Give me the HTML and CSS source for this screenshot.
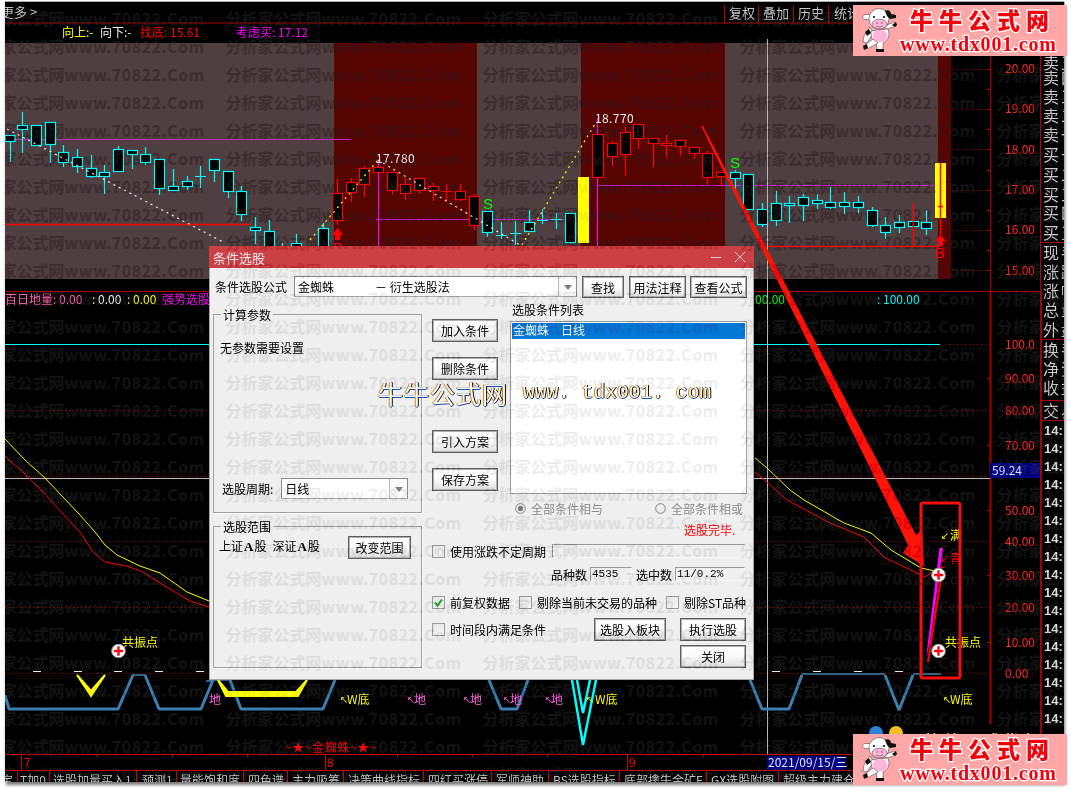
FILE: index.html
```html
<!DOCTYPE html>
<html lang="zh-CN">
<head>
<meta charset="utf-8">
<title>条件选股</title>
<link rel="stylesheet" href="styles.css">
</head>
<body>
<div class="screen">
  <svg class="defs" width="0" height="0" aria-hidden="true">
    <defs>
      <symbol id="cow" viewBox="0 0 36 46">
        <path class="cow-line" d="M8 20 2 29l-1 6 4 1 5-8 1-3Z" fill="#fff"/>
        <path class="cow-line" d="M25 22 34 19 33 15 27 17 22 20Z" fill="#fff"/>
        <path d="M30 18l4-3 1 3-2 2Z" fill="#111"/>
        <path class="cow-line" d="M9 24C9 33 12 35 14 36L15 43H21L21 36C27 33 28 28 26 22Z" fill="#fff"/>
        <ellipse cx="18" cy="29" rx="7.500" ry="6.500" fill="#ffb6d9"/>
        <path class="cow-line" d="M11 32 3 38l2 4 11-6Z" fill="#fff"/>
        <path d="M1 39l4-2 1 4-4 2ZM14 42h8v3h-8ZM3 25l4-3 2 4-4 3Z" fill="#111"/>
        <path d="M11 3l2 4-3 0ZM23 2l2 4-3 1Z" fill="#a5681c"/>
        <ellipse class="cow-line" cx="5" cy="10" rx="4.500" ry="2.600" fill="#fff"/>
        <ellipse class="cow-line" cx="17" cy="12" rx="10" ry="10.500" fill="#fff"/>
        <path d="M23 4c4-2 6 1 6 3l5 1v3l-6 1-3-3Z" fill="#111"/>
        <ellipse class="cow-line" cx="17.500" cy="17" rx="7.500" ry="4.800" fill="#ffb6d9"/>
        <circle cx="12" cy="10" r="1.100" fill="#111"/>
        <circle cx="22" cy="10" r="1.100" fill="#111"/>
        <circle cx="15" cy="16" r=".8" fill="#c03060"/>
        <circle cx="20" cy="16" r=".8" fill="#c03060"/>
        <path class="cow-line" d="M14 19q3.500 2 7 0" fill="none"/>
      </symbol>
      <symbol id="plus" viewBox="0 0 15 15">
        <circle cx="7.500" cy="7.500" r="6.800" fill="#fff" stroke="#999"/>
        <path d="M7.500 2.800V12.200M2.800 7.500H12.200" stroke="#f01018" stroke-width="2.400"/>
      </symbol>
    </defs>
  </svg>

  <main class="terminal">
    <svg class="chart" viewBox="5 2 1059 780" width="1059" height="780">
      <rect class="bg-grey" x="5" y="43" width="329" height="236"/>
      <rect class="bg-red" x="334" y="43" width="143" height="236"/>
      <rect class="bg-grey" x="477" y="43" width="104" height="236"/>
      <rect class="bg-red" x="581" y="43" width="144" height="236"/>
      <rect class="bg-grey" x="725" y="43" width="213" height="236"/>
      <rect class="bg-red" x="938" y="43" width="13" height="236"/>

      <path class="frame" d="M5 23H1040M5 291.500H1040M724.500 5V23M758.500 5V23M793.500 5V23M828.500 5V23M863.500 5V23M897.500 5V23M933.500 5V23M971.500 5V23M1006.500 5V23M1044.500 5V23"/>
      <path class="frame" d="M990.500 23V291M1040.500 55V291"/>
      <path class="frame-heavy" d="M990.500 291V724M1041 291V782"/>
      <path class="frame" d="M1040 242.500H1064M1040 339.500H1064M1040 400.500H1064M1040 420.500H1064"/>
      <path class="frame" d="M987 69.500H990M987 89.500H990M987 109.500H990M987 129.500H990M987 149.500H990M987 170.500H990M987 190.500H990M987 210.500H990M987 230.500H990M987 250.500H990M987 270.500H990"/>
      <path class="frame" d="M987 378.500H990M987 445.500H990M987 510.500H990M987 575.500H990M987 642.500H990"/>
      <path class="dotted" d="M953 69.500H987M953 109.500H987M953 149.500H987M953 190.500H987M953 230.500H987M953 270.500H987M945 344.500H987"/>
      <path class="dotted" d="M5 410.500H987M5 476.500H987M5 541.500H987M5 607.500H987M5 673.500H987"/>

      <g class="lbl top-btn">
        <text x="1" y="17">更多 &gt;</text>
        <text x="729" y="18">复权</text>
        <text x="763" y="18">叠加</text>
        <text x="798" y="18">历史</text>
        <text x="834" y="18">统计</text>
      </g>
      <g class="lbl">
        <text class="c-yellow" x="62" y="37">向上:-</text>
        <text class="c-white" x="100" y="37">向下:-</text>
        <text class="c-red" x="140" y="37">找底: 15.61</text>
        <text class="c-mag" x="236" y="37">考虑买: 17.12</text>
      </g>

      <path class="ln-mag" d="M5 139.500H351M376 219.500H570M597 185.500H940"/>
      <path class="ln-red" d="M5 224.500H251M767 246.500H940"/>
      <path class="ln-magv" d="M378.500 160V250M597.500 118V250"/>

      <g class="k-cy">
        <path d="M10.500 135V162M22.500 112V153M36.500 125V146M50.500 122V163M63.500 145V167M77.500 149V173M91.500 155V178M104.500 165V194M118.500 146V171M132.500 150V169M145.500 147V165M159.500 159V195M173.500 169V190M187.500 176V190M200.500 166V188M195 176.500H206M214.500 159V182M228.500 171V198M241.500 186V221M255.500 217V244M269.500 220V250M282.500 243V250M296.500 234V250M323.500 223V250M487.500 211V237M501.500 222V239M496 235.500H507M515.500 221V245M510 233.500H521M529.500 210V231M542.500 209V224M537 220.500H548M556.500 213V229M551 219.500H562M570.500 213V243"/>
        <rect x="5" y="135.500" width="10" height="6"/><rect x="17.500" y="125.500" width="10" height="4"/><rect x="31.500" y="125.500" width="10" height="20"/><rect x="45.500" y="122.500" width="10" height="22"/><rect x="58.500" y="152.500" width="10" height="10"/><rect x="72.500" y="157.500" width="10" height="9"/><rect x="86.500" y="168.500" width="10" height="8"/><rect x="99.500" y="172.500" width="10" height="4"/><rect x="113.500" y="149.500" width="10" height="22"/><rect x="127.500" y="150.500" width="10" height="4"/><rect x="140.500" y="154.500" width="10" height="8"/><rect x="154.500" y="159.500" width="10" height="29"/><rect x="168.500" y="186.500" width="10" height="4"/><rect x="182.500" y="181.500" width="10" height="5"/><rect x="209.500" y="159.500" width="10" height="11"/><rect x="223.500" y="171.500" width="10" height="20"/><rect x="236.500" y="191.500" width="10" height="23"/><rect x="250.500" y="227.500" width="10" height="3"/><rect x="264.500" y="231.500" width="10" height="24"/><rect x="291.500" y="243.500" width="10" height="12"/><rect x="318.500" y="228.500" width="10" height="27"/><rect x="482.500" y="211.500" width="10" height="21"/><rect x="524.500" y="222.500" width="10" height="9"/><rect x="565.500" y="213.500" width="10" height="29"/>
      </g>
      <g class="k-rd">
        <path d="M337.500 179V225M351.500 178V202M364.500 166V197M378.500 167V172M392.500 172V195M405.500 178V200M419.500 178V194M433.500 183V201M446.500 184V202M441 191.500H452M460.500 184V201M474.500 194V230M612.500 141V166M625.500 127V175M638.500 124V149M653.500 138V167M666.500 135V158M661 144.500H672M680.500 140V156M694.500 147V159M707.500 151V185M721.500 172V185"/>
        <rect x="332.500" y="193.500" width="10" height="27"/><rect x="346.500" y="182.500" width="10" height="10"/><rect x="359.500" y="168.500" width="10" height="16"/><rect x="373.500" y="167.500" width="10" height="5"/><rect x="387.500" y="172.500" width="10" height="18"/><rect x="400.500" y="184.500" width="10" height="9"/><rect x="414.500" y="178.500" width="10" height="12"/><rect x="428.500" y="186.500" width="10" height="4"/><rect x="455.500" y="191.500" width="10" height="8"/><rect x="469.500" y="196.500" width="10" height="29"/><rect x="592.500" y="134.500" width="11" height="43"/><rect x="607.500" y="143.500" width="10" height="13"/><rect x="620.500" y="132.500" width="10" height="22"/><rect x="633.500" y="124.500" width="10" height="14"/><rect x="648.500" y="138.500" width="10" height="5"/><rect x="661.500" y="143.500" width="10" height="2"/><rect x="675.500" y="140.500" width="10" height="6"/><rect x="689.500" y="147.500" width="10" height="6"/><rect x="702.500" y="153.500" width="10" height="24"/><rect x="716.500" y="172.500" width="10" height="4"/>
      </g>
      <g class="k-cy">
        <path d="M735.500 170V192M762.500 203V227M776.500 191V226M789.500 196V223M803.500 194V221M817.500 194V209M830.500 187V209M844.500 192V214M858.500 196V213M872.500 207V227M885.500 217V239M899.500 215V233M926.500 210V235"/>
        <rect x="730.500" y="172.500" width="10" height="6"/><rect x="743.500" y="174.500" width="10" height="35"/><rect x="757.500" y="209.500" width="10" height="15"/><rect x="771.500" y="203.500" width="10" height="17"/><rect x="784.500" y="203.500" width="10" height="2"/><rect x="798.500" y="197.500" width="10" height="8"/><rect x="812.500" y="200.500" width="10" height="3"/><rect x="825.500" y="202.500" width="10" height="5"/><rect x="839.500" y="202.500" width="10" height="4"/><rect x="853.500" y="202.500" width="10" height="5"/><rect x="867.500" y="210.500" width="10" height="15"/><rect x="880.500" y="225.500" width="10" height="7"/><rect x="894.500" y="222.500" width="10" height="5"/><rect x="908.500" y="221.500" width="10" height="5"/><rect x="921.500" y="222.500" width="10" height="6"/>
      </g>
      <path class="ln-red" d="M913.500 203V246"/>
      <rect class="fill-yellow" x="578" y="177" width="11" height="66"/>
      <rect class="fill-yellow" x="935" y="163" width="11" height="55"/>
      <path class="ln-red" d="M940.500 163V240M938 206.500H943"/>
      <path class="fill-red" d="M337.500 228 343 235H340V240H335V235H332ZM940.500 235 946 241H943V246H938V241H935Z"/>
      <text class="sig c-red" x="333" y="253">B</text>
      <text class="sig c-red" x="935" y="258">B</text>
      <text class="sig c-green" x="483" y="209">S</text>
      <text class="sig c-green" x="730" y="168">S</text>

      <path class="dash-w" d="M7 129 105 180 225 243M378 160 520 245"/>
      <path class="dash-y" d="M310 240 378 160M522 245 595 124"/>
      <text class="lbl mono-n" x="376" y="163">17.780</text>
      <text class="lbl mono-n" x="595" y="123">18.770</text>

      <g class="lbl">
        <text class="c-axis" x="1005" y="73">20.00</text>
        <text class="c-axis" x="1005" y="113">19.00</text>
        <text class="c-axis" x="1005" y="154">18.00</text>
        <text class="c-axis" x="1005" y="194">17.00</text>
        <text class="c-axis" x="1005" y="234">16.00</text>
        <text class="c-axis" x="1005" y="275">15.00</text>
        <text class="c-axis" x="1005" y="349">100.0</text>
        <text class="c-axis" x="1005" y="383">90.00</text>
        <text class="c-axis" x="1005" y="415">80.00</text>
        <text class="c-axis" x="1005" y="450">70.00</text>
        <text class="c-axis" x="1005" y="515">50.00</text>
        <text class="c-axis" x="1005" y="546">40.00</text>
        <text class="c-axis" x="1005" y="580">30.00</text>
        <text class="c-axis" x="1005" y="612">20.00</text>
        <text class="c-axis" x="1005" y="647">10.00</text>
        <text class="c-axis" x="1005" y="678">0.00</text>
      </g>
      <rect class="fill-navy" x="990" y="463" width="50" height="15"/>
      <text class="lbl c-pale" x="992" y="475">59.24</text>

      <g class="side">
        <text x="1043" y="69">卖五</text><text x="1043" y="84">卖四</text><text x="1043" y="103">卖三</text><text x="1043" y="122">卖二</text><text x="1043" y="141">卖一</text>
        <text x="1043" y="161">买一</text><text x="1043" y="181">买二</text><text x="1043" y="201">买三</text><text x="1043" y="219">买四</text><text x="1043" y="239">买五</text>
        <text x="1043" y="259">现手</text><text x="1043" y="278">涨跌</text><text x="1043" y="297">涨幅</text><text x="1043" y="316">总量</text><text x="1043" y="336">外盘</text>
        <text x="1043" y="356">换手</text><text x="1043" y="375">净资</text><text x="1043" y="394">收益</text><text x="1043" y="417">交易</text>
      </g>
      <g class="clock">
        <text x="1044" y="435">14:</text><text x="1044" y="453">14:</text><text x="1044" y="471">14:</text><text x="1044" y="489">14:</text><text x="1044" y="507">14:</text><text x="1044" y="525">14:</text><text x="1044" y="543">14:</text><text x="1044" y="561">14:</text><text x="1044" y="579">14:</text><text x="1044" y="597">14:</text><text x="1044" y="615">14:</text><text x="1044" y="633">14:</text><text x="1044" y="651">14:</text><text x="1044" y="669">14:</text><text x="1044" y="687">14:</text><text x="1044" y="705">14:</text><text x="1044" y="723">14:</text>
      </g>

      <g class="lbl">
        <text class="c-pink" x="5" y="304">百日地量: 0.00</text>
        <text class="c-white" x="92" y="304">: 0.00</text>
        <text class="c-yellow" x="127" y="304">: 0.00</text>
        <text class="c-mag" x="162" y="304">强势选股</text>
        <text class="c-green" x="755" y="304">00.00</text>
        <text class="c-cyan" x="877" y="304">: 100.00</text>
      </g>

      <path class="ln-cyan" d="M5 344.500H940"/>
      <path class="ln-cross" d="M5 478.500H990M767.500 39V755"/>

      <path class="curve-y" d="M5 439 25 460 45 478 80 515 95 532 105 545 117 555 140 566 160 573 187 592 209 601M755 458 767 468 790 490 804 500 837 519 844 523 871 533 891 550 921 568 935 571"/>
      <path class="curve-r" d="M5 456 12 463 20 469 43 492 62 513 80 532 93 552 105 562 127 566 143 572 160 583 190 601 209 607M755 472 767 482 787 500 830 523 864 537 884 557 925 577 938 568 945 567"/>
      <path class="ln-red2" d="M941 578 928 662"/>
      <path class="fill-mag" d="M939.500 548H943L930 642 926 658Z"/>

      <path class="blue-top" d="M133 675H145M206 681H213M230 680H209M802 674H885M913 674H941"/>
      <path class="blue" d="M5 695 9 709H118L133 675M145 675 159 709H201L213 680M230 680 241 709H323L335 680M489 680 501 709H517L528 680M750 680 762 709H789L802 675M885 675 899 710 913 675"/>
      <path class="v-yellow" d="M77 675 91 691 105 675 91 696ZM218 680 228 692H296L307 680 298 696H226Z"/>
      <path class="v-cyan" d="M572 680 583 745 596 680M577 680 583 713 590 680"/>
      <path class="dash-short" d="M33 671.500H41M74 671.500H82M114 671.500H122M155 671.500H163M196 671.500H204M772 671.500H780M813 671.500H821M854 671.500H862M895 671.500H903"/>

      <g class="lbl">
        <text class="c-yellow" x="122" y="647">共振点</text>
        <text class="c-yellow" x="945" y="647">共振点</text>
        <text class="c-yellow" x="950" y="540">满</text>
        <text class="c-red" x="950" y="563">青</text>
        <text class="c-yellow" x="347" y="704">W底</text>
        <text class="c-yellow" x="595" y="704">W底</text>
        <text class="c-yellow" x="950" y="704">W底</text>
        <text class="c-pink2" x="209" y="704">地</text>
        <text class="c-pink2" x="414" y="704">地</text>
        <text class="c-pink2" x="470" y="704">地</text>
        <text class="c-pink2" x="510" y="704">地</text>
        <text class="c-pink2" x="551" y="704">地</text>
      </g>
      <g class="tiny">
        <text class="c-yellow" x="340" y="703">↖</text>
        <text class="c-yellow" x="586" y="703">↖</text>
        <text class="c-yellow" x="943" y="703">↖</text>
        <text class="c-yellow" x="941" y="539">↙</text>
        <text class="c-red" x="941" y="562">↙</text>
        <text class="c-pink2" x="407" y="703">↖</text>
        <text class="c-pink2" x="463" y="703">↖</text>
        <text class="c-pink2" x="503" y="703">↖</text>
        <text class="c-pink2" x="545" y="703">↖</text>
      </g>
      <use href="#plus" x="111" y="643.500" width="15" height="15"/>

      <path class="arrow" d="M701 126H703L916 535 922 530 924 566 903 553 908 545Z"/>
      <rect class="box" x="921" y="503" rx="2" width="39" height="175"/>
      <use href="#plus" x="931" y="567.500" width="15" height="15"/>
      <use href="#plus" x="931" y="643.500" width="15" height="15"/>

      <text class="lbl c-red spaced" x="285" y="752">~★~金蜘蛛~★~</text>
      <path class="frame-red" d="M5 754.500H852M5 770.500H852M21.500 755V770M325.500 755V770M627.500 755V770M96.500 755V757M172.500 755V757M247.500 755V757M397.500 755V757M472.500 755V757M547.500 755V757M703.500 755V757"/>
      <g class="lbl c-red">
        <text x="24" y="767">7</text>
        <text x="327" y="767">8</text>
        <text x="629" y="767">9</text>
      </g>
      <rect class="fill-navy" x="767" y="756" width="78" height="14"/>
      <text class="lbl c-pale" x="768" y="767">2021/09/15/三</text>

      <circle class="ball-b" cx="876" cy="733" r="7"/>
      <circle class="ball-y" cx="896" cy="733" r="7"/>
      <text class="promo" x="925" y="745">精钻公式指标</text>

      <path class="frame-red" d="M17.500 771V782M49.500 771V782M136.500 771V782M176.500 771V782M243.500 771V782M287.500 771V782M343.500 771V782M423.500 771V782M491.500 771V782M548.500 771V782M619.500 771V782M706.500 771V782M778.500 771V782"/>
      <g class="lbl tab">
        <text x="1" y="785">宝</text><text x="20" y="785">T加0</text><text x="53" y="785">选股加量买入1</text><text x="142" y="785">预测1</text><text x="180" y="785">量能饱和度</text><text x="248" y="785">四色谱</text><text x="292" y="785">主力吸筹</text><text x="348" y="785">决策曲线指标</text><text x="428" y="785">四红买涨停</text><text x="496" y="785">军师神助</text><text x="553" y="785">BS选股指标</text><text x="624" y="785">底部擒牛金矿F</text><text x="711" y="785">GX选股附图</text><text x="783" y="785">超级主力建仓</text>
      </g>
    </svg>

    <section class="dialog">
      <header class="dlg-title">
        <span>条件选股</span>
        <svg class="dlg-ctrl" viewBox="0 0 34 12" width="34" height="12">
          <path d="M0 6.500H10M24 1 34 11M34 1 24 11"/>
        </svg>
      </header>
      <div class="dlg-formula">
        <span class="formula-label">条件选股公式</span>
        <div class="combo combo-formula">
          <span class="combo-name">金蜘蛛</span><span>－ 衍生选股法</span>
          <i class="combo-arrow"></i>
        </div>
        <button class="btn btn-find">查找</button>
        <button class="btn btn-wide">用法注释</button>
        <button class="btn btn-wide">查看公式</button>
      </div>
      <div class="dlg-main">
        <div class="dlg-left">
          <div class="group group-calc">
            <span class="legend">计算参数</span>
            <p class="note">无参数需要设置</p>
            <div class="period">
              <span>选股周期:</span>
              <div class="combo combo-period"><span>日线</span><i class="combo-arrow"></i></div>
            </div>
          </div>
          <div class="group group-range">
            <span class="legend">选股范围</span>
            <div class="range">
              <span>上证<b class="letter">A</b>股<span class="word-gap"></span>深证<b class="letter">A</b>股</span>
              <button class="btn btn-range">改变范围</button>
            </div>
          </div>
        </div>
        <div class="dlg-right">
          <div class="dlg-upper">
            <div class="actions">
              <button class="btn btn-action">加入条件</button>
              <button class="btn btn-action gap-a">删除条件</button>
              <button class="btn btn-action gap-b">引入方案</button>
              <button class="btn btn-action gap-c">保存方案</button>
            </div>
            <div class="cond">
              <div class="cond-title">选股条件列表</div>
              <div class="list"><div class="list-sel">金蜘蛛　日线</div></div>
              <div class="radios">
                <span class="radio-item"><i class="radio radio-on"></i>全部条件相与</span>
                <span class="radio-item"><i class="radio"></i>全部条件相或</span>
              </div>
              <div class="done">选股完毕.</div>
            </div>
          </div>
          <div class="row row-a">
            <i class="check"></i><span>使用涨跌不定周期</span>
            <span class="field field-long"></span>
          </div>
          <div class="row row-b">
            <span>品种数</span><span class="field field-s">4535</span>
            <span class="after-s">选中数</span><span class="field field-m">11/0.2%</span>
          </div>
          <div class="row row-c">
            <i class="check check-on"><svg viewBox="0 0 13 13" width="13" height="13"><path d="M3 6.500 5.500 9.500 10 3.500"/></svg></i><span>前复权数据</span>
            <i class="check check-gap"></i><span>剔除当前未交易的品种</span>
            <i class="check check-gap"></i><span>剔除ST品种</span>
          </div>
          <div class="row row-d">
            <i class="check"></i><span>时间段内满足条件</span>
            <button class="btn btn-board">选股入板块</button>
            <button class="btn btn-action btn-run">执行选股</button>
          </div>
          <div class="row row-e"><button class="btn btn-action">关闭</button></div>
        </div>
      </div>
    </section>

    <svg class="watermark" viewBox="5 2 1059 780" width="1059" height="780" aria-hidden="true">
      <defs>
        <pattern id="wm" patternUnits="userSpaceOnUse" x="-31.500" y="5" width="257" height="28">
          <text class="wm-text" x="0" y="20">分析家公式网<tspan class="wm-latin">www.70822.Com</tspan></text>
        </pattern>
      </defs>
      <rect x="5" y="2" width="1059" height="780" fill="url(#wm)"/>
    </svg>

    <div class="stamp"><span class="stamp-cn">牛牛公式网</span><span class="stamp-url">www. tdx001. com</span></div>
  </main>

  <aside class="banner banner-top">
    <svg class="cow" width="36" height="46"><use href="#cow"/></svg>
    <div class="banner-text"><div class="banner-cn">牛牛公式网</div><div class="banner-url">www.tdx001.com</div></div>
  </aside>
  <aside class="banner banner-bottom">
    <svg class="cow" width="36" height="46"><use href="#cow"/></svg>
    <div class="banner-text"><div class="banner-cn">牛牛公式网</div><div class="banner-url">www.tdx001.com</div></div>
  </aside>
</div>
</body>
</html>
```

FILE: styles.css
```css
* { box-sizing: border-box; }
html, body { margin: 0; padding: 0; background: #fff; }
body { font: 12px "Noto Sans CJK SC", "Liberation Sans", sans-serif; color: #000; }

.screen { position: relative; width: 1071px; height: 790px; overflow: hidden; background: #fff; }
.defs { position: absolute; }

.terminal {
  position: absolute; left: 5px; top: 2px; width: 1059px; height: 780px;
  background: #000; overflow: hidden; box-shadow: 0 -1px 0 #aaa, 1px 0 0 #aaa, 1px 3px 3px #777;
}
.chart { display: block; }
.watermark { position: absolute; left: 0; top: 0; mix-blend-mode: difference; pointer-events: none; }
.wm-text { font: bold 16px "Noto Sans CJK SC", "Liberation Sans", sans-serif; fill: #131313; }
.wm-latin { letter-spacing: .5px; }

.bg-grey { fill: #503f40; }
.bg-red { fill: #560500; }
.frame { stroke: #b00000; fill: none; }
.frame-heavy { stroke: #a00000; stroke-width: 2; fill: none; }
.frame-red { stroke: #c80000; fill: none; }
.dotted { stroke: #c00000; stroke-dasharray: 1 3; fill: none; }

.lbl text, text.lbl { font: 12px "Noto Sans CJK SC", "Liberation Sans", sans-serif; }
.lbl { font: 12px "Liberation Sans", "Noto Sans CJK SC", sans-serif; }
.top-btn text { fill: #c8c8c8; font-size: 13px; }
.c-yellow { fill: #ff0; }
.c-white { fill: #eee; }
.c-red { fill: #f00; }
.c-mag { fill: #f0f; }
.c-green { fill: #0f0; }
.c-cyan { fill: #0ff; }
.c-pink { fill: #ff69b4; }
.c-pink2 { fill: #ff60e0; }
.c-axis { fill: #ff2a2a; }
.c-pale { fill: #dfe4ff; }
.mono-n { fill: #eee; letter-spacing: 0.400px; }
text.spaced { letter-spacing: .6px; }
text.sig { font: 15px "Liberation Sans", sans-serif; }
.tiny text { font: 10px "DejaVu Sans", sans-serif; }

.ln-mag { stroke: #c428c4; fill: none; }
.ln-magv { stroke: #f0f; fill: none; }
.ln-red { stroke: #f00; stroke-width: 1.500; fill: none; }
.ln-cyan { stroke: #0ff; stroke-width: 1.200; fill: none; }
.ln-cross { stroke: #bbb; fill: none; }
.ln-red2 { stroke: #f00; stroke-width: 2; fill: none; }
.fill-mag { fill: #f0f; }

.k-cy path, .k-cy rect { stroke: #0ff; stroke-width: 1.200; }
.k-rd path, .k-rd rect { stroke: #f00; stroke-width: 1.200; }
.k-cy rect, .k-rd rect { fill: #000; }

.fill-yellow { fill: #ff0; }
.fill-red { fill: #f00; }
.fill-navy { fill: #000080; }
.dash-w { stroke: #eee; stroke-dasharray: 2 4; stroke-width: 1.200; fill: none; }
.dash-y { stroke: #ff0; stroke-dasharray: 2 4; stroke-width: 1.200; fill: none; }
.dash-short { stroke: #eee; stroke-width: 1.200; fill: none; }

.side text { font: 16px "Noto Sans CJK SC", sans-serif; fill: #ccc; letter-spacing: 2px; }
.clock text { font: bold 13px "Liberation Sans", sans-serif; fill: #ddd; }

.curve-y { stroke: #ff0; fill: none; }
.curve-r { stroke: #f00; fill: none; }
.blue { stroke: #3d7fae; stroke-width: 3; fill: none; stroke-linejoin: bevel; }
.blue-top { stroke: #3d7fae; stroke-width: 1.500; fill: none; }
.v-yellow { fill: #ff0; stroke: #ff0; stroke-width: 2; }
.v-cyan { stroke: #0ff; stroke-width: 2.500; fill: none; }
.arrow { fill: #fa1508; }
.box { fill: none; stroke: #f4100c; stroke-width: 3; }
.ball-b { fill: #2f80d8; }
.ball-y { fill: #f0c020; }
.promo { font: bold 14px "Noto Sans CJK SC", sans-serif; fill: #ffd23c; letter-spacing: 6px; }
.tab text { fill: #ccc; }

/* dialog */
.dialog {
  position: absolute; left: 204px; top: 244px; width: 545px; height: 434px;
  background: #efefef; border: 1px solid #a8a8a8; border-top: 0;
  display: flex; flex-direction: column;
}
.dlg-title {
  height: 22px; background: #ca4045; color: #f6e8e8; font-size: 13px;
  display: flex; align-items: center; justify-content: space-between;
  padding: 0 4px 0 4px; margin: 0 -1px;
}
.dlg-ctrl { margin-right: 5px; }
.dlg-ctrl path { stroke: #f3c8c8; fill: none; }
.dlg-formula { display: flex; align-items: flex-start; margin: 8px 0 0 5px; height: 23px; }
.formula-label { width: 79px; line-height: 21px; }
.combo {
  position: relative; background: #fff; border: 1px solid #8a8a8a; border-bottom-color: #aaa;
  display: flex; align-items: center; padding-left: 3px;
}
.combo-formula { width: 283px; height: 21px; }
.combo-name { width: 77px; }
.combo-arrow {
  position: absolute; right: 0; top: 0; bottom: 0; width: 18px; border-left: 1px solid #bbb; background: #fafafa;
}
.combo-arrow::after {
  content: ""; position: absolute; left: 5px; top: 8px;
  border: 4px solid transparent; border-top: 5px solid #808080; border-bottom: 0;
}
.btn {
  font: 12px "Noto Sans CJK SC", sans-serif; color: #000; padding: 0;
  border: 1px solid #5f5f5f; outline: 1px solid #b0b0b0; outline-offset: -2px;
  background: linear-gradient(#fff, #fafafa 50%, #dfdfdf); height: 22px;
}
.btn-find { width: 42px; margin-left: 5px; }
.btn-wide { width: 57px; margin-left: 5px; }
.btn-wide + .btn-wide { margin-left: 4px; }
.dlg-main { display: flex; margin-top: 4px; padding-left: 3px; }
.dlg-left { width: 209px; margin-top: 11px; flex: none; }
.group { position: relative; border: 1px solid #a0a0a0; box-shadow: 1px 1px 0 #fff; }
.group-calc { height: 199px; padding: 25px 6px 0; }
.group-range { height: 142px; margin-top: 13px; padding: 12px 5px 0; }
.legend { position: absolute; left: 7px; top: -8px; padding: 0 2px; background: #efefef; line-height: 15px; }
.note { margin: 0; line-height: 16px; }
.period { display: flex; align-items: center; margin-top: 122px; padding-left: 2px; }
.combo-period { width: 127px; height: 21px; margin-left: 8px; }
.range { display: flex; align-items: flex-start; justify-content: space-between; }
.range > span { line-height: 15px; margin-top: -1px; }
.letter { font: bold 13px "Liberation Serif", serif; margin: 0 1px; }
.word-gap { display: inline-block; width: 6px; }
.btn-range { width: 63px; height: 23px; margin: -3px 5px 0 0; }
.dlg-right { width: 315px; margin-left: 10px; flex: none; }
.dlg-upper { display: flex; }
.actions { width: 66px; padding-top: 16px; display: flex; flex-direction: column; }
.btn-action { width: 66px; height: 23px; }
.gap-a { margin-top: 15px; }
.gap-b { margin-top: 50px; }
.gap-c { margin-top: 15px; }
.cond { width: 237px; margin-left: 12px; }
.cond-title { height: 18px; padding-left: 2px; line-height: 13px; }
.list { height: 173px; background: #fff; border: 1px solid #a0a0a0; padding: 1px; }
.list-sel { height: 16px; background: #0078d7; color: #fff; line-height: 14px; padding-left: 1px; }
.radios { display: flex; justify-content: space-between; margin-top: 6px; height: 16px; padding: 0 4px 0 5px; color: #8a8a8a; }
.radio-item { display: flex; align-items: center; gap: 5px; }
.radio { width: 11px; height: 11px; border-radius: 50%; border: 1px solid #999; background: #eee; box-shadow: inset 0 0 1px #777; display: block; }
.radio-on { background: radial-gradient(circle, #777 0 2.500px, #eee 3px); }
.done { height: 16px; margin-top: 6px; padding-left: 174px; color: #f00; line-height: 16px; }
.row { display: flex; align-items: center; }
.row-a { margin-top: 6px; height: 14px; }
.row-b { margin-top: 9px; height: 14px; padding-left: 119px; }
.row-c { margin-top: 14px; height: 14px; }
.row-d { margin-top: 9px; height: 23px; }
.row-e { margin-top: 4px; height: 23px; justify-content: flex-end; padding-right: 1px; }
.check {
  display: block; flex: none; width: 13px; height: 13px; margin-right: 5px;
  border: 1px solid #9a9a9a; background: linear-gradient(135deg, #e4e4e4, #f6f6f6);
}
.check svg { display: block; margin: -1px; }
.check svg path { fill: none; stroke: #18a018; stroke-width: 2; }
.check-gap { margin-left: 9px; }
.field { display: block; height: 14px; border: 1px solid #f8f8f8; border-top-color: #999; border-left-color: #999; font: 11px/12px "Liberation Mono", monospace; padding-left: 1px; }
.field-long { width: 193px; margin-left: auto; margin-right: 2px; }
.field-s { width: 42px; margin-left: 3px; }
.after-s { margin-left: 4px; }
.field-m { width: 70px; margin-left: 3px; }
.btn-board { width: 72px; height: 23px; margin-left: auto; }
.btn-run { margin-left: 14px; margin-right: 1px; }

/* pasted stamp over the dialog */
.stamp {
  position: absolute; left: 373px; top: 378px; display: flex; align-items: center; gap: 15px;
  color: #fff; text-shadow: 1px 0 0 #000, -1px 0 0 #d08000, 0 1px 0 #1050c0;
  white-space: nowrap;
}
.stamp-cn { font: 25px/26px "Noto Sans CJK SC", sans-serif; letter-spacing: 1px; }
.stamp-url { font: 19.600px/26px "Liberation Mono", monospace; }

/* corner banners */
.banner {
  position: absolute; left: 853px; width: 214px; height: 51px; background: #ffa6a6;
  display: flex; align-items: flex-start; padding: 2px 0 0 9px;
}
.banner-top { top: 5px; }
.banner-bottom { top: 734px; }
.cow { flex: none; }
.cow-line { stroke: #333; stroke-width: .5; }
.banner-text { margin-left: 2px; color: #f4000c; font-weight: bold; }
.banner-cn {
  font: 900 23px/25px "Noto Sans CJK SC", sans-serif; letter-spacing: 6px; margin-left: 10px; height: 29px;
  -webkit-text-stroke: 2.500px #fff; paint-order: stroke fill;
}
.banner-url {
  font: bold 20px/17px "Liberation Serif", serif; letter-spacing: .8px;
  -webkit-text-stroke: 2.500px #fff; paint-order: stroke fill;
}
```
